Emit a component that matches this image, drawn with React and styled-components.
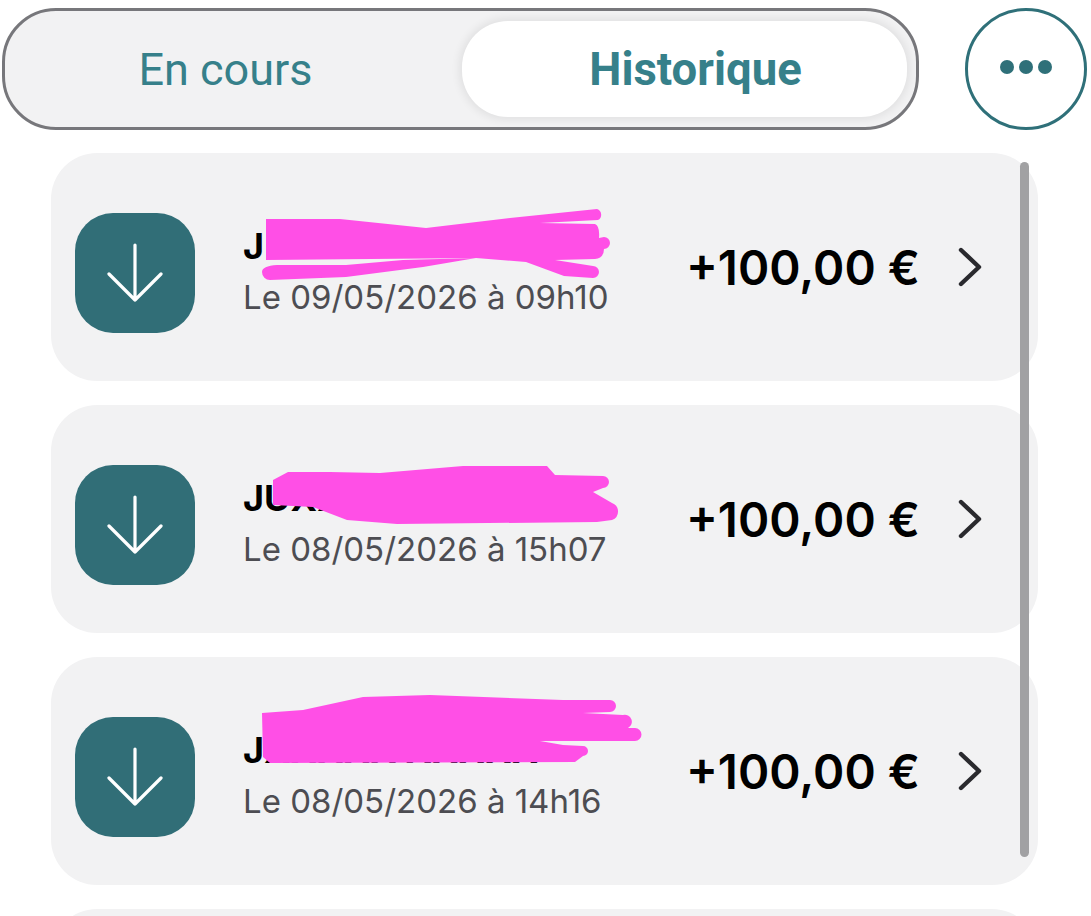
import styled, { createGlobalStyle } from "styled-components";

const GlobalStyle = createGlobalStyle`
  html, body {
    margin: 0;
    background: #fff;
  }
  body {
    overflow: hidden;
    font-family: "Inter", "Liberation Sans", sans-serif;
  }
`;

const Page = styled.div`
  width: 1091px;
  height: 916px;
  overflow: hidden;
  padding: 8px 0 0 2px;
  box-sizing: border-box;
`;

const Header = styled.div`
  display: flex;
  align-items: center;
  gap: 46px;
`;

const Segmented = styled.div`
  width: 917px;
  height: 122px;
  box-sizing: border-box;
  border: 3px solid #77777b;
  border-radius: 54px;
  background: #f2f2f3;
  display: grid;
  grid-template-columns: 1fr 445px;
  padding: 10px 9px 10px 0;
`;

const Tab = styled.div`
  display: flex;
  align-items: center;
  justify-content: center;
  font-family: "Roboto", sans-serif;
  font-size: ${(p) => (p.$active ? "45.5px" : "45px")};
  color: #36808a;
  font-weight: ${(p) => (p.$active ? 700 : 400)};
  background: ${(p) => (p.$active ? "#fff" : "transparent")};
  border-radius: 46px;
  box-shadow: ${(p) => (p.$active ? "0 0 9px 3px rgba(0, 0, 0, 0.07)" : "none")};
  padding: ${(p) => (p.$active ? "0 0 0 22px" : "0 16px 0 0")};
`;

const MoreButton = styled.div`
  width: 122px;
  height: 122px;
  box-sizing: border-box;
  border: 3px solid #2f7079;
  border-radius: 50%;
  display: flex;
  align-items: center;
  justify-content: center;
  gap: 5px;
  padding-bottom: 4px;
`;

const Dot = styled.span`
  width: 14px;
  height: 14px;
  border-radius: 50%;
  background: #2f7079;
`;

const List = styled.div`
  position: relative;
  margin: 23px 0 0 49px;
  width: 987px;
  display: flex;
  flex-direction: column;
  gap: 24px;
`;

const Card = styled.div`
  position: relative;
  height: 228px;
  flex-shrink: 0;
  background: #f2f2f3;
  border-radius: 46px;
  display: flex;
  align-items: center;
  padding: 0 56px 0 24px;
  box-sizing: border-box;
`;

const IconTile = styled.div`
  width: 120px;
  height: 120px;
  margin-top: 12px;
  border-radius: 38px;
  background: #316e77;
  flex-shrink: 0;
  display: flex;
  align-items: center;
  justify-content: center;
`;

const Info = styled.div`
  flex: 1;
  margin: 8px 0 0 48px;
  min-width: 0;
`;

const Name = styled.div`
  font-size: 36px;
  font-weight: 700;
  line-height: 40px;
  color: #000;
  white-space: nowrap;
`;

const DateText = styled.div`
  margin-top: 12px;
  font-size: 33px;
  line-height: 38px;
  color: #4d4d52;
  white-space: nowrap;
`;

const Amount = styled.div`
  font-size: 47.5px;
  font-weight: 600;
  color: #000;
  white-space: nowrap;
  margin-right: 38px;
`;

const Scribble = styled.svg`
  position: absolute;
  top: 0;
  left: 0;
  width: 987px;
  height: 228px;
  pointer-events: none;
`;

const ScrollThumb = styled.div`
  position: absolute;
  top: 9px;
  left: 969px;
  width: 9px;
  height: 695px;
  border-radius: 5px;
  background: #a1a1a3;
`;

const ArrowDown = () => (
  <svg width="56" height="60" viewBox="0 0 56 60" fill="none" stroke="#fff" strokeWidth="3.2" strokeLinecap="round" strokeLinejoin="round">
    <path d="M28 2V57M2 31L28 57L54 31" />
  </svg>
);

const Chevron = () => (
  <svg width="24" height="40" viewBox="0 0 24 40" fill="none" stroke="#2a2a2e" strokeWidth="4.4" strokeLinecap="round" strokeLinejoin="round">
    <path d="M3 3L21 20L3 37" />
  </svg>
);

// marker strokes, written in page coordinates and shifted to the card
const scribbles = [
  "M266 219L340 219L426 228L510 218L597 209A6 6 0 0 1 598 220L540 223L595 224Q600 226 599 238L604 237A6 6 0 0 1 604 249Q604 258 595 259L555 260L593 266A6 6 0 0 1 593 278L564 276L526 262L476 258L266 260ZM476 258L423 267L346 277L270 280A8 8 0 0 1 262 272Q262 266 277 265L346 265L403 260Z",
  "M288 472L330 472L380 473L463 466L547 466L555 475L603 476A6 6 0 0 1 603 488L593 492L612 503A9 9 0 0 1 612 520L597 522L397 524L347 520L313 507L273 505L273 480Z",
  "M262 713L303 710L363 697L430 695L563 700L610 700A6 6 0 0 1 610 712L583 713L623 715A7 7 0 0 1 628 728L635 728A6 6 0 0 1 635 741L540 741L563 745L583 746A5 5 0 0 1 583 756L575 762L270 763L263 757Z",
];

const rows = [
  { date: "Le 09/05/2026 à 09h10", name: "J" },
  { date: "Le 08/05/2026 à 15h07", name: "JUXXXX XXXXX" },
  { date: "Le 08/05/2026 à 14h16", name: "JXXXXX XXXXX" },
  { date: "", name: "" },
];

function App() {
  return (
    <Page>
      <GlobalStyle />
      <Header>
        <Segmented>
          <Tab>En cours</Tab>
          <Tab $active>Historique</Tab>
        </Segmented>
        <MoreButton>
          <Dot />
          <Dot />
          <Dot />
        </MoreButton>
      </Header>
      <List>
        {rows.map((row, i) => (
          <Card key={i}>
            {row.name && (
              <>
                <IconTile>
                  <ArrowDown />
                </IconTile>
                <Info>
                  <Name>{row.name}</Name>
                  <DateText>{row.date}</DateText>
                </Info>
                <Amount>+100,00 €</Amount>
                <Chevron />
                <Scribble viewBox="0 0 987 228">
                  <path d={scribbles[i]} fill="#ff4fe6" transform={`translate(-51 ${-153 - i * 252})`} />
                </Scribble>
              </>
            )}
          </Card>
        ))}
        <ScrollThumb />
      </List>
    </Page>
  );
}

export default App;
